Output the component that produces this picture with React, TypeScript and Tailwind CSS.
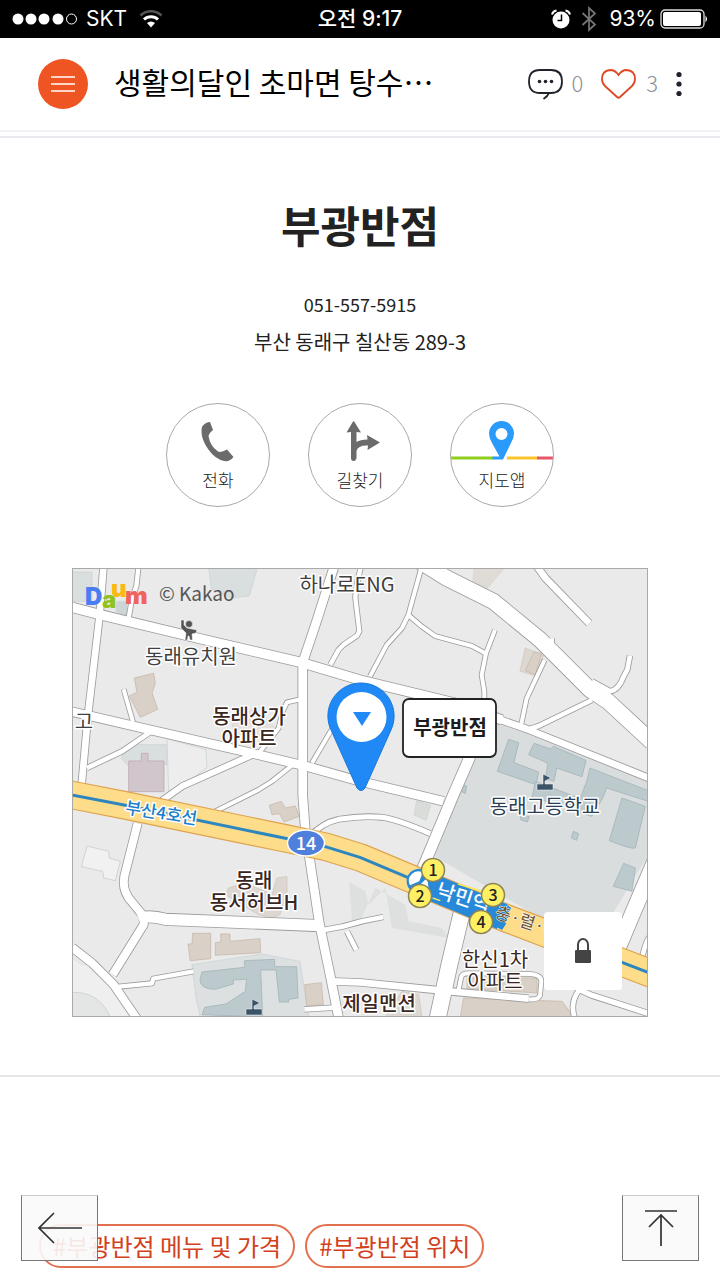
import { clsx } from "clsx";

interface Road {
  d: string;
  w: number;
}

interface MapLabel {
  lines: string[];
  x: number;
  y: number;
  className?: string;
}

// road centre lines, three units to one map pixel
const roads: Road[] = [
  { d: "M0 118L85 140L350 204L690 284L864 336L1164 409L1290 456", w: 28 },
  { d: "M1270 450L1364 483L1740 634", w: 20 },
  { d: "M95 -10L83 140L48 441L28 660", w: 20 },
  { d: "M200 -10L193 55L180 92L170 150", w: 13 },
  { d: "M788 -10L730 171L692 284L692 680L700 786L742 1066L770 1200L802 1360", w: 26 },
  { d: "M868 -10L852 60L850 90L862 190L855 203L815 230L800 245L775 290", w: 13 },
  { d: "M0 431L220 482L540 556L700 594L864 640L1114 700", w: 26 },
  { d: "M155 364L183 462", w: 12 },
  { d: "M235 492L150 550L45 600", w: 14 },
  { d: "M540 561L330 655L250 712", w: 18 },
  { d: "M197 766L157 925Q150 960 170 990L215 1045V1070L122 1220", w: 24 },
  { d: "M660 592L600 640L560 665L420 735", w: 12 },
  { d: "M690 393L645 403L632 430L620 480L560 556", w: 12 },
  { d: "M830 420L775 491L720 585", w: 12 },
  { d: "M200 1052Q230 1040 280 1054L745 1073", w: 34 },
  { d: "M745 1088L810 1076L870 1060L934 1047", w: 14 },
  { d: "M825 1090L853 1146", w: 14 },
  { d: "M0 1138L60 1185L125 1250L200 1360", w: 24 },
  { d: "M140 1256L240 1246L244 1232L365 1210", w: 13 },
  { d: "M714 805Q750 765 800 754Q870 742 930 748Q980 756 1075 797", w: 15 },
  { d: "M1240 440L1190 575L1144 681L1040 930", w: 32 },
  { d: "M1170 1030L1130 1200L1095 1360", w: 48 },
  { d: "M775 1240L864 1243L1154 1272L1370 1292", w: 20 },
  { d: "M1160 1265L1168 1226Q1172 1216 1190 1216L1372 1218Q1408 1220 1408 1240L1404 1282Q1400 1296 1370 1294", w: 12 },
  { d: "M697 1324L800 1318", w: 14 },
  { d: "M1049 -4L1009 141L990 180L944 231L894 325", w: 12 },
  { d: "M1009 141L1050 176L1089 204L1200 234L1240 256", w: 12 },
  { d: "M1269 186L1242 256L1229 321L1237 370V410", w: 12 },
  { d: "M1040 -22L1120 28L1264 100L1404 215L1554 365L1610 402L1740 522", w: 46 },
  { d: "M1390 -12L1420 30L1552 166", w: 20 },
  { d: "M1440 211V240L1480 290", w: 12 },
  { d: "M1418 276L1364 391L1348 468", w: 12 },
  { d: "M1374 482L1400 474L1560 396", w: 14 },
  { d: "M1560 340L1614 370Q1640 366 1655 325L1666 305L1674 263", w: 14 },
  { d: "M1770 830L1676 1050L1630 1160", w: 46 },
  { d: "M1750 1090Q1725 1100 1710 1170", w: 14 },
  { d: "M1520 1268Q1490 1310 1512 1360", w: 14 },
  { d: "M1515 1262L1560 1282L1740 1340", w: 16 },
];

const highway =
  "M-10 679L160 712L640 811L760 836L864 868L1014 931L1300 1050L1650 1183L1740 1218";

const labels: MapLabel[] = [
  { lines: ["하나로ENG"], x: 275, y: 24 },
  { lines: ["동래유치원"], x: 119, y: 96 },
  { lines: ["고"], x: 12, y: 161 },
  { lines: ["동래상가", "아파트"], x: 177, y: 156, className: "font-medium fill-[#3a2620]" },
  { lines: ["동래", "동서허브H"], x: 182, y: 320, className: "font-medium fill-[#3a2620]" },
  { lines: ["제일맨션"], x: 307, y: 443, className: "font-medium fill-[#3a2620]" },
  { lines: ["한신1차", "아파트"], x: 423, y: 399, className: "fill-[#3a2620]" },
  { lines: ["동래고등학교"], x: 473, y: 246, className: "fill-[#2a3f55]" },
];

const exits = [
  { n: 1, x: 361, y: 302 },
  { n: 2, x: 348, y: 328 },
  { n: 3, x: 421, y: 327 },
  { n: 4, x: 409, y: 354 },
];

const tags = ["#부광반점 메뉴 및 가격", "#부광반점 위치"];

function StatusBar() {
  return (
    <div className="grid h-[38px] grid-cols-[1fr_auto_1fr] items-center bg-black px-3 font-['Inter','Noto_Sans_CJK_KR',sans-serif] text-[21px] leading-7 text-white">
      <div className="flex items-center">
        <svg width="66" height="12" viewBox="0 0 66 12">
          {[6, 19, 32, 46].map((x) => (
            <circle key={x} cx={x} cy="6" r="5.500" fill="#fff" />
          ))}
          <circle cx="59.500" cy="6" r="5" fill="none" stroke="#fff" />
        </svg>
        <span className="ml-2">SKT</span>
        <svg className="ml-3" width="24" height="18" viewBox="0 0 24 18" fill="none" strokeWidth="3">
          <path d="M1.500 5.500A15 15 0 0 1 22.500 5.500" stroke="#555" strokeWidth="2.500" />
          <path d="M5 9.500A10 10 0 0 1 19 9.500" stroke="#fff" />
          <path d="M8 13A6 6 0 0 1 16 13L12 17.500Z" fill="#fff" />
        </svg>
      </div>
      <div className="font-medium">오전 9:17</div>
      <div className="flex items-center justify-end">
        <svg width="20" height="20" viewBox="0 0 20 20">
          <circle cx="10" cy="11" r="8.500" fill="#fff" />
          <path d="M1 5.500Q2 2 5.500 1.500M19 5.500Q18 2 14.500 1.500" stroke="#fff" strokeWidth="2" fill="none" />
          <path d="M10.500 5.500V11.500H6.500" stroke="#000" strokeWidth="1.500" fill="none" />
        </svg>
        <svg className="ml-2.5" width="16" height="26" viewBox="0 0 16 26">
          <path d="M1.500 7L14 18.500L8 24V2L14 7.500L1.500 19" fill="none" stroke="#777" strokeWidth="1.700" />
        </svg>
        <span className="ml-3">93%</span>
        <svg className="ml-1" width="48" height="20" viewBox="0 0 48 20">
          <rect x="1" y="1" width="43" height="18" rx="4" fill="none" stroke="#ddd" strokeWidth="1.300" />
          <rect x="3" y="3" width="38" height="14" rx="2" fill="#fff" />
          <path d="M45.500 6.500Q48.500 10 45.500 13.500Z" fill="#fff" />
        </svg>
      </div>
    </div>
  );
}

function Header() {
  return (
    <header className="border-b-2 border-[#e9e9f0] pb-1">
      <div className="flex h-[94px] items-center border-b-2 border-[#f0f0f6] px-[38px]">
        <button
          type="button"
          aria-label="메뉴"
          className="flex size-[50px] shrink-0 items-center justify-center rounded-full bg-[#ee5522]"
        >
          <svg width="24" height="16" viewBox="0 0 24 16" stroke="#fff" strokeWidth="1.500">
            <path d="M0 1H24M0 8H24M0 15H24" />
          </svg>
        </button>
        <h1 className="ml-[26px] flex-1 pb-1.5 text-[30px] leading-10 whitespace-nowrap text-black">
          생활의달인 초마면 탕수⋯
        </h1>
        <div className="flex shrink-0 items-center text-[22px] leading-8 text-[#8a9099]">
          <button type="button" aria-label="댓글" className="flex items-center gap-2">
            <svg width="35" height="31" viewBox="0 0 35 31">
              <path
                d="M12 1H23Q34 1 34 12.500Q34 24 23 24H21Q20 27 15.500 30M16 24H12Q1 24 1 12.500Q1 1 12 1M15.500 24H21"
                fill="none"
                stroke="#20232a"
                strokeWidth="1.800"
              />
              <circle cx="11.500" cy="12.500" r="1.800" fill="#20232a" />
              <circle cx="17.500" cy="12.500" r="1.800" fill="#20232a" />
              <circle cx="23.500" cy="12.500" r="1.800" fill="#20232a" />
            </svg>
            <span className="pb-1 font-light">0</span>
          </button>
          <button type="button" aria-label="공감" className="ml-[18px] flex items-center gap-2.5">
            <svg width="35" height="30" viewBox="0 0 35 30">
              <path
                d="M17.500 6Q14 1 9.500 1Q1 1.500 1 10Q1 14 4 17L16 28Q17.500 29.500 19 28L31 17Q34 14 34 10Q34 1.500 25.500 1Q21 1 17.500 6Z"
                fill="none"
                stroke="#dd4a26"
                strokeWidth="1.800"
              />
            </svg>
            <span className="pb-1 font-light">3</span>
          </button>
          <button type="button" aria-label="더보기" className="ml-[18px]">
            <svg width="6" height="26" viewBox="0 0 6 26" fill="#20232a">
              <circle cx="3" cy="3.500" r="2.600" />
              <circle cx="3" cy="13" r="2.600" />
              <circle cx="3" cy="22.500" r="2.600" />
            </svg>
          </button>
        </div>
      </div>
    </header>
  );
}

const actionClass =
  "flex size-[104px] flex-col items-center overflow-hidden rounded-full border border-[#aaa] pt-4 text-[17px] leading-7 font-light text-[#222]";

function Actions() {
  return (
    <nav className="mt-[42px] flex justify-center gap-[38px]">
      <a href="tel:051-557-5915" className={actionClass}>
        <svg width="102" height="46" viewBox="0 0 102 46">
          <path
            d="M35.500 6Q39 2 43 2L46 10Q42 13 41.500 16Q43 26 51 31.500Q54 33 60 29.500L66.500 37Q63 42 57 41Q48 39 41 29Q34 19 34.500 10Q34.700 7 35.500 6Z"
            fill="#6b6b6b"
          />
        </svg>
        전화
      </a>
      <a href="#directions" className={actionClass}>
        <svg width="102" height="46" viewBox="0 0 102 46">
          <path
            d="M44 1.500Q45 1 45.500 2L52 12.500L47.500 12V22Q51 19.500 58.500 19.500L58 15Q65 19 71 22.500L58.500 30L59 25.500Q49 25 47.500 31V38Q47 41 44.500 41Q42 41 42 38V12L37.500 12.500Z"
            fill="#6b6b6b"
          />
        </svg>
        길찾기
      </a>
      <a href="#map" className={actionClass}>
        <svg width="102" height="46" viewBox="0 0 102 46">
          <path d="M0 38H42" stroke="#8fce1c" strokeWidth="3" />
          <path d="M56 38H86" stroke="#fcc42c" strokeWidth="3" />
          <path d="M86 38H102" stroke="#e8566b" strokeWidth="3" />
          <path
            fillRule="evenodd"
            d="M50.500 1A12.500 12.500 0 0 1 63 13.500Q63 18 60 23L52 39.500H41.500V36.500H48.500L41 23Q38 18 38 13.500A12.500 12.500 0 0 1 50.500 1ZM50.500 8A6 6 0 1 0 50.500 20A6 6 0 1 0 50.500 8Z"
            fill="#2b9bfb"
          />
        </svg>
        지도앱
      </a>
    </nav>
  );
}

function Buildings() {
  return (
    <g strokeWidth="2.500">
      <g fill="#d9dede" stroke="#cdd5d6">
        <path d="M410 0L418 62L478 90L532 84L556 0Z" />
        <path d="M0 12H60V100H0Z" />
        <path d="M135 100H165V145L132 130Z" fill="#cfd4d6" />
        <path d="M285 512L402 545L405 598L350 640L290 672Z" fill="#ecedec" />
        <path d="M165 530H284V590H165L148 570Z" />
        <path d="M360 1190L570 1158L684 1180L710 1347H385L372 1290Z" fill="#dce0e0" />
        <path
          d="M832 942L880 970L890 1010L940 960L960 1080L1130 1110L1110 1080L1010 1060L1000 1010L910 960L864 1060H840Z"
          fill="#dde0df"
          stroke="none"
        />
        <path d="M1195 575L1274 460L1729 640V860L1560 1140L1080 860Z" fill="#dadddd" stroke="none" />
        <path d="M1034 698L1076 712L1062 757L1026 740Z" fill="#d9dcd8" />
      </g>
      <g fill="#bccace" stroke="#a3b4b8">
        <path d="M1310 514L1340 524L1326 584L1400 612L1392 650L1276 610Z" />
        <path d="M1386 526L1436 543L1444 535L1542 577L1530 626L1454 600L1446 640L1420 632L1428 586L1370 560Z" />
        <path d="M1554 600L1729 668V700L1604 660L1592 690L1560 745L1510 730L1544 640Z" />
        <path d="M1390 640L1520 690L1510 720L1380 690Z" />
        <path d="M1650 690L1720 715L1690 840Q1680 845 1612 818Z" />
        <path d="M1655 886L1690 900L1680 970L1624 955Z" />
        <path d="M1504 790L1520 797L1514 817L1498 810Z" />
        <path d="M1346 740L1372 746L1366 762L1346 755Z" />
        <path d="M1170 650L1184 654L1180 676L1168 670Z" />
        <path d="M390 1212L518 1198V1178L608 1174V1196H674L678 1290L650 1294V1302H622L612 1206H566L572 1347L390 1340L398 1318L462 1308L520 1270L524 1234L484 1236V1248L430 1264Q385 1264 384 1235Z" />
      </g>
      <g fill="#d9d0c8" stroke="#c9b9ac">
        <path d="M187 330L245 316L250 346L240 375L257 424L205 448L172 384L195 373Z" />
        <path d="M592 712L628 700L640 720L670 714L682 745L636 762L622 737L600 740Z" />
        <path d="M362 1096H416V1172L355 1178L348 1128H360Z" />
        <path d="M430 1124L447 1122L446 1098H474V1120L564 1112L566 1154L430 1162Z" />
        <path d="M698 1250L748 1244L754 1310L704 1314Z" />
        <path d="M615 930L645 926V970L624 1040L600 1050L560 1040L460 980L470 960L520 945L600 980Z" opacity=".7" />
        <path d="M480 468L540 425L590 460L610 480L570 510L490 500Z" opacity=".35" />
        <path d="M1360 240L1414 262L1395 325L1344 309Z" opacity=".7" />
        <path d="M1386 252L1408 256L1390 320L1360 308Z" />
        <path d="M1204 0H1300L1240 70L1200 55Z" opacity=".6" stroke="none" />
        <path d="M1175 1290L1470 1300L1505 1347H1165Z" />
        <path d="M1185 1230H1395V1275L1185 1262Z" />
        <path d="M990 1270L1040 1280L1050 1347H940Z" opacity=".7" />
      </g>
      <path d="M170 579H208V556H228V579H276V671H170Z" fill="#d2c6cd" stroke="#bfa9b4" />
      <path d="M45 834L110 850L112 870L145 880L130 938L95 930L92 910L28 896Z" fill="#f0f1f0" stroke="#ccc" />
      <path d="M0 1170L30 1190L60 1190L125 1255L185 1347H0Z" fill="#eeefee" stroke="#ddd" />
      <path d="M0 1273Q80 1270 115 1347H0Z" fill="#e4e6e5" stroke="#ccc" />
    </g>
  );
}

function SchoolIcon({ x, y }: { x: number; y: number }) {
  return (
    <path
      d="M0 10H6V0L14 4L8 7V10H16V16H0Z"
      transform={`translate(${x} ${y})`}
      fill="#3b5468"
      stroke="#fff"
      strokeWidth=".5"
    />
  );
}

function StreetMap() {
  return (
    <figure id="map" className="relative mx-[10%] mt-[61px]">
      <svg className="block w-full" viewBox="0 0 576 449" role="img" aria-label="부광반점 지도">
        <rect width="576" height="449" fill="#e9eae9" />
        <g transform="scale(.33333)" fill="none">
          <Buildings />
          {roads.map((road) => (
            <path key={road.d} d={road.d} stroke="#9c9c9c" strokeWidth={road.w + 5} strokeLinejoin="round" />
          ))}
          {roads.map((road) => (
            <path key={road.d} d={road.d} stroke="#fff" strokeWidth={road.w} strokeLinejoin="round" />
          ))}
          <g strokeLinejoin="round">
            <path d={highway} stroke="#dfa34f" strokeWidth="86" />
            <path d={highway} stroke="#fddc8a" strokeWidth="79" />
            <path
              d="M-10 679L160 712L640 811L760 836L864 868L1014 931M1500 1126L1650 1183L1740 1218"
              stroke="#2e86bf"
              strokeWidth="9"
            />
          </g>
          {/* station platform */}
          <path d="M1060 950L1290 1046" stroke="#2789d8" strokeWidth="80" />
          <path d="M1300 1008L1318 1020L1308 1034L1312 1046L1298 1054L1302 1068L1290 1086L1268 1074Z" fill="#2789d8" />
          <path d="M1158 948L1235 972M1082 990L1105 998" stroke="#ffe64d" strokeWidth="4" />
          <circle cx="1042" cy="940" r="38" fill="#2789d8" />
          <path d="M1014 952A28 28 0 0 1 1052 914L1042 940ZM1030 964L1065 930L1070 960Z" fill="#fff" />
        </g>

        <g
          textAnchor="middle"
          stroke="#fff"
          strokeWidth="3"
          strokeLinejoin="round"
          paintOrder="stroke"
          fill="#404040"
          className="text-[20px]"
        >
          {labels.map((label) => (
            <text key={label.y} y={label.y} className={label.className}>
              {label.lines.map((line, i) => (
                <tspan key={line} x={label.x} dy={i * 22}>
                  {line}
                </tspan>
              ))}
            </text>
          ))}
          <text x="89" y="251" transform="rotate(9 89 247)" className="text-[17px] font-medium fill-[#1b7fcb]">
            부산4호선
          </text>
          <text
            x="391"
            y="337"
            transform="rotate(18 391 331)"
            strokeWidth="0"
            className="font-medium fill-white"
          >
            낙민역
          </text>
          <text
            x="455"
            y="360"
            transform="rotate(18 455 355)"
            strokeWidth="1"
            className="text-[17px] fill-[#665236]"
          >
            충·렬·대
          </text>
        </g>

        {/* kindergarten */}
        <g stroke="#fff" strokeWidth=".5" fill="#555">
          <circle cx="117" cy="56" r="3.500" />
          <path d="M109 52H112V57L115 60L120 61L125 62L124 65L120 66L120.500 72H118L117 68H116L115.500 72H113L114 65L109 60Z" />
        </g>
        <SchoolIcon x={465} y={206} />
        <SchoolIcon x={174} y={431} />

        <ellipse cx="234" cy="275" rx="18.500" ry="13" fill="#4f80dc" stroke="#fff" strokeWidth="1.500" />
        <text x="234" y="282" textAnchor="middle" fill="#fff" className="text-[18px] font-medium">
          14
        </text>

        {exits.map((exit) => (
          <g key={exit.n}>
            <circle cx={exit.x} cy={exit.y} r="11.500" fill="#fff063" stroke="#8a8458" strokeWidth="1.500" />
            <text
              x={exit.x}
              y={exit.y + 6}
              textAnchor="middle"
              fill="#222"
              className="text-[16px] font-medium"
            >
              {exit.n}
            </text>
          </g>
        ))}

        <path
          d="M289 115A33 33 0 0 1 318.500 163L293 220Q289 225 285 220L259.500 163A33 33 0 0 1 289 115Z"
          fill="#2089f5"
          stroke="#1878da"
        />
        <circle cx="289.500" cy="149" r="25" fill="#fff" />
        <path d="M281 144H299L290 158Z" fill="#2089f5" />

        <rect x="331" y="131" width="93" height="58" rx="6" fill="#fff" stroke="#222" strokeWidth="1.800" />
        <text x="378" y="167" textAnchor="middle" fill="#1c1c1c" className="text-[20px] font-bold">
          부광반점
        </text>

        <text className="font-['Inter',sans-serif] text-[24px] font-black">
          <tspan x="13" y="37" fill="#4b7cf3">
            D
          </tspan>
          <tspan x="30" y="40" fill="#8fc31f">
            a
          </tspan>
          <tspan x="39" y="29" fill="#fdb813">
            u
          </tspan>
          <tspan x="53" y="36" fill="#f0635c">
            m
          </tspan>
        </text>
        <text x="87" y="33" fill="#555" className="text-[19px]">
          © Kakao
        </text>
        <path d="M0 .5H576M.5 0V449M575.500 0V449M0 448.500H576" stroke="#a9a9a9" />
      </svg>
      <button
        type="button"
        aria-label="지도 잠금"
        className="absolute right-[26px] bottom-[27px] flex size-[78px] items-center justify-center rounded-sm bg-white"
      >
        <svg width="18" height="26" viewBox="0 0 18 26">
          <path d="M4 13V6.500A5 5.500 0 0 1 14 6.500V13" fill="none" stroke="#444" strokeWidth="2" />
          <rect x="1" y="12" width="16" height="13" rx="1" fill="#444" />
        </svg>
      </button>
    </figure>
  );
}

const floatClass =
  "fixed bottom-[19px] flex h-[66px] w-[77px] items-center justify-center border border-[#777] border-t-[#ccc] bg-[#f9f9f9]/90";

export default function App() {
  return (
    <div className="min-h-screen bg-white font-['Noto_Sans_CJK_KR','Noto_Sans',sans-serif] text-[#222]">
      <StatusBar />
      <Header />
      <main>
        <section className="border-b-2 border-[#e6e6ea] pt-14 pb-[58px]">
          <h2 className="text-center text-[43px] leading-[60px] font-bold">부광반점</h2>
          <address className="mt-[31px] text-center leading-[38px] text-[#222] not-italic">
            <p className="text-[18px] leading-[38px]">051-557-5915</p>
            <p className="text-[20px] leading-[38px]">부산 동래구 칠산동 289-3</p>
          </address>
          <Actions />
          <StreetMap />
        </section>
        <div className="mt-[147px] flex gap-2.5 pb-3 pl-[39px]">
          {tags.map((tag) => (
            <a
              key={tag}
              href="#tag"
              className="flex h-11 items-center rounded-full border-2 border-[#e2704e] px-3 text-[24px] leading-8 whitespace-nowrap text-[#d2401c]"
            >
              {tag}
            </a>
          ))}
        </div>
      </main>
      <button type="button" aria-label="뒤로" className={clsx(floatClass, "left-[21px]")}>
        <svg width="44" height="32" viewBox="0 0 44 32" fill="none" stroke="#333" strokeWidth="1.700">
          <path d="M44 16H1M16 1L1 16L16 31" />
        </svg>
      </button>
      <button type="button" aria-label="맨 위로" className={clsx(floatClass, "right-[21px]")}>
        <svg width="32" height="36" viewBox="0 0 32 36" fill="none" stroke="#333" strokeWidth="1.700">
          <path d="M0 1H32M16 36V5M4 17L16 5L28 17" />
        </svg>
      </button>
    </div>
  );
}
